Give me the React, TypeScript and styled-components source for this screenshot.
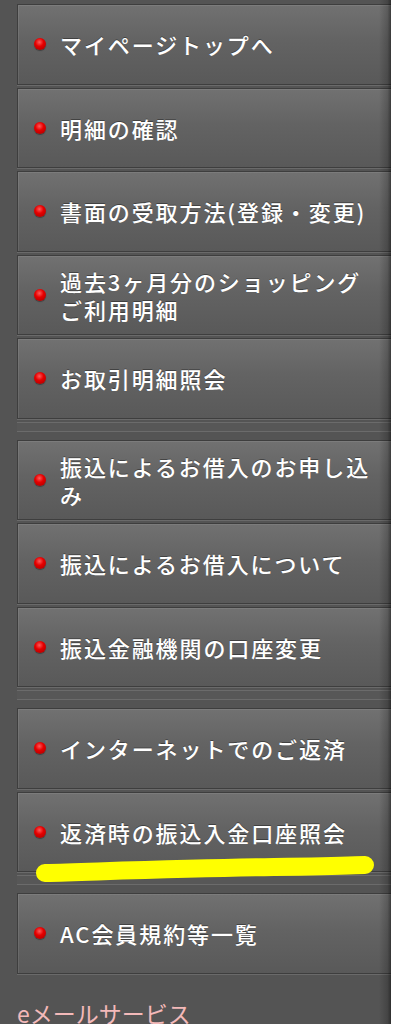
import React from "react";
import styled, { createGlobalStyle } from "styled-components";

const GlobalStyle = createGlobalStyle`
  html, body {
    margin: 0;
    padding: 0;
    background: #ffffff;
  }
  body {
    font-family: "Noto Sans CJK JP", "Noto Sans", sans-serif;
  }
`;

const Page = styled.div`
  position: relative;
  width: 391px;
  min-height: 1024px;
  overflow: hidden;
  background: #545454;
  padding: 4px 0 0 17px;
  box-sizing: border-box;

  &::after {
    content: "";
    position: absolute;
    top: 0;
    right: 0;
    bottom: 0;
    width: 12px;
    pointer-events: none;
    background: linear-gradient(
      90deg,
      rgba(0, 0, 0, 0) 0%,
      rgba(0, 0, 0, 0.18) 70%,
      rgba(0, 0, 0, 0.45) 100%
    );
  }
`;

const Group = styled.div`
  display: flex;
  flex-direction: column;
  gap: 3px;
`;

const Row = styled.a`
  position: relative;
  display: flex;
  align-items: center;
  gap: 14px;
  height: 80.5px;
  box-sizing: border-box;
  padding: 0 10px 0 16px;
  border: 1px solid #3e3e3e;
  border-right: none;
  background: linear-gradient(180deg, #717171 0%, #636363 45%, #595959 100%);
  box-shadow: inset 1px 1px 0 rgba(255, 255, 255, 0.08), 0 1px 0 #6a6a6a;
  color: #ffffff;
  text-decoration: none;
`;

const Dot = styled.span`
  flex: none;
  width: 12px;
  height: 12px;
  border-radius: 50%;
  background: radial-gradient(
    circle at 45% 35%,
    #ff5a5a 0%,
    #e60000 40%,
    #b00000 85%,
    #7a0000 100%
  );
  box-shadow: 0 1px 1px rgba(0, 0, 0, 0.35);
`;

const Label = styled.span`
  font-size: 22px;
  font-weight: 500;
  letter-spacing: 1.9px;
  line-height: 28px;
  white-space: nowrap;
  text-shadow: 0 -1px 0 rgba(0, 0, 0, 0.35);
`;

const Line = styled.span`
  display: block;
`;

const Separator = styled.div`
  height: 18px;
  margin-top: 3px;
  background: linear-gradient(
    180deg,
    #6b6b6b 0px,
    #6b6b6b 1px,
    #575757 1px,
    #575757 9px,
    #6b6b6b 9px,
    #6b6b6b 10px,
    #545454 10px
  );
`;

const Marker = styled.svg`
  position: absolute;
  left: 16px;
  top: 63px;
  width: 340px;
  height: 28px;
  pointer-events: none;
`;

const Heading = styled.h2`
  margin: 24px 0 0 0;
  font-size: 23px;
  font-weight: 400;
  letter-spacing: 0;
  color: #f3b9b9;
  line-height: 30px;
`;

type Item = { lines: string[]; marked?: boolean };

const groups: Item[][] = [
  [
    { lines: ["マイページトップへ"] },
    { lines: ["明細の確認"] },
    { lines: ["書面の受取方法(登録・変更)"] },
    { lines: ["過去3ヶ月分のショッピング", "ご利用明細"] },
    { lines: ["お取引明細照会"] },
  ],
  [
    { lines: ["振込によるお借入のお申し込", "み"] },
    { lines: ["振込によるお借入について"] },
    { lines: ["振込金融機関の口座変更"] },
  ],
  [
    { lines: ["インターネットでのご返済"] },
    { lines: ["返済時の振込入金口座照会"], marked: true },
  ],
  [{ lines: ["AC会員規約等一覧"] }],
];

const MenuRow = ({ item }: { item: Item }) => (
  <Row href="#">
    <Dot />
    <Label>
      {item.lines.map((l) => (
        <Line key={l}>{l}</Line>
      ))}
    </Label>
    {item.marked && (
      <Marker viewBox="0 0 340 28">
        <path
          d="M11 17 C 80 15, 160 12, 240 11 S 320 9, 331 9"
          stroke="#ffff00"
          strokeWidth="18"
          strokeLinecap="round"
          fill="none"
        />
      </Marker>
    )}
  </Row>
);

export default function App() {
  return (
    <>
      <GlobalStyle />
      <Page>
        {groups.map((g, gi) => (
          <React.Fragment key={gi}>
            <Group>
              {g.map((item) => (
                <MenuRow key={item.lines.join("")} item={item} />
              ))}
            </Group>
            {gi < groups.length - 1 && <Separator />}
          </React.Fragment>
        ))}
        <Heading>eメールサービス</Heading>
      </Page>
    </>
  );
}
